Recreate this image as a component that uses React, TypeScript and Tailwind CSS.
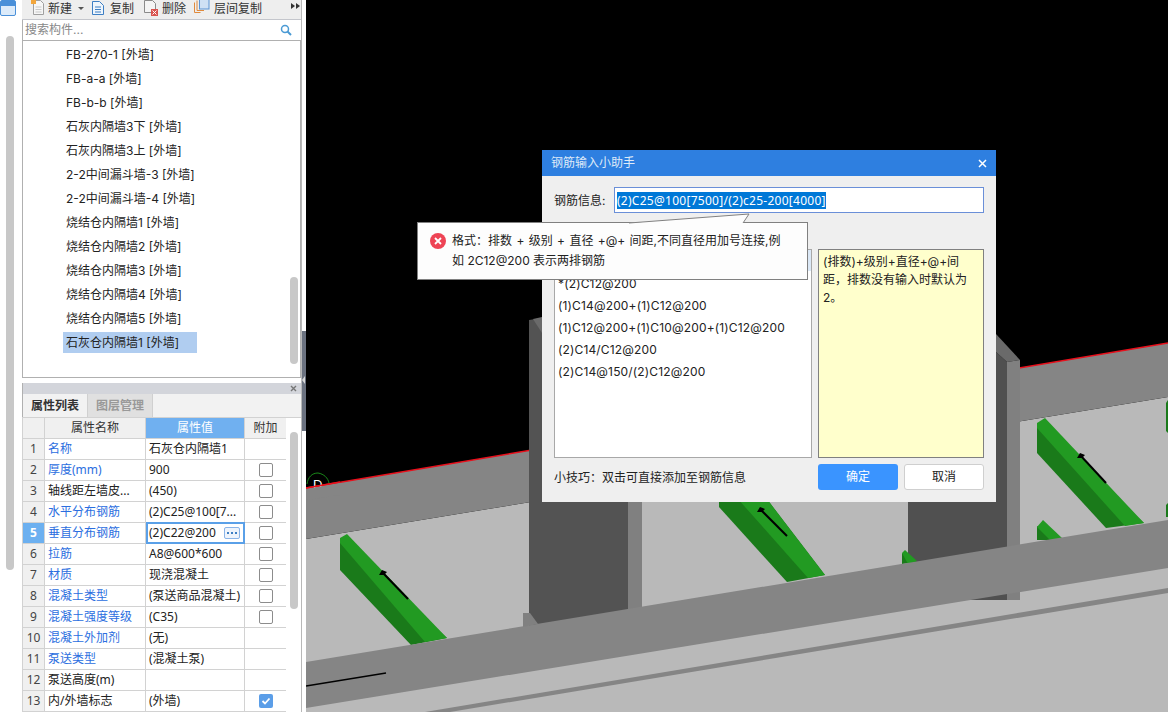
import React from 'react';

const FONT = { fontFamily: 'Inter, "Noto Sans CJK SC", sans-serif' };

const listItems = [
  'FB-270-1 [外墙]',
  'FB-a-a [外墙]',
  'FB-b-b [外墙]',
  '石灰内隔墙3下 [外墙]',
  '石灰内隔墙3上 [外墙]',
  '2-2中间漏斗墙-3 [外墙]',
  '2-2中间漏斗墙-4 [外墙]',
  '烧结仓内隔墙1 [外墙]',
  '烧结仓内隔墙2 [外墙]',
  '烧结仓内隔墙3 [外墙]',
  '烧结仓内隔墙4 [外墙]',
  '烧结仓内隔墙5 [外墙]',
  '石灰仓内隔墙1 [外墙]',
];

interface Prop {
  name: string;
  value: string;
  link: boolean;
  check?: 'off' | 'on';
}

const props: Prop[] = [
  { name: '名称', value: '石灰仓内隔墙1', link: true },
  { name: '厚度(mm)', value: '900', link: true, check: 'off' },
  { name: '轴线距左墙皮...', value: '(450)', link: false, check: 'off' },
  { name: '水平分布钢筋', value: '(2)C25@100[7...', link: true, check: 'off' },
  { name: '垂直分布钢筋', value: '(2)C22@200', link: true, check: 'off' },
  { name: '拉筋', value: 'A8@600*600', link: true, check: 'off' },
  { name: '材质', value: '现浇混凝土', link: true, check: 'off' },
  { name: '混凝土类型', value: '(泵送商品混凝土)', link: true, check: 'off' },
  { name: '混凝土强度等级', value: '(C35)', link: true, check: 'off' },
  { name: '混凝土外加剂', value: '(无)', link: true },
  { name: '泵送类型', value: '(混凝土泵)', link: true },
  { name: '泵送高度(m)', value: '', link: false },
  { name: '内/外墙标志', value: '(外墙)', link: false, check: 'on' },
];

const samples = [
  '*(2)C12@200',
  '(1)C14@200+(1)C12@200',
  '(1)C12@200+(1)C10@200+(1)C12@200',
  '(2)C14/C12@200',
  '(2)C14@150/(2)C12@200',
];

// green bars in page coordinates
const Bar = ({ dark, light, arrow }: { dark: string; light: string; arrow?: [number, number, number, number] }) => (
  <>
    <polygon points={dark} fill="#1a7a1a" />
    <polygon points={light} fill="#229a22" />
    {arrow && (
      <>
        <line x1={arrow[0]} y1={arrow[1]} x2={arrow[2]} y2={arrow[3]} stroke="#000" strokeWidth="2" />
        <polygon points={`${arrow[0] - 4},${arrow[1] + 2} ${arrow[0] - 1},${arrow[1] - 3} ${arrow[0] + 4},${arrow[1] - 1} ${arrow[0] + 1},${arrow[1] + 2}`} fill="#000" />
      </>
    )}
  </>
);

const Scene = () => (
  <svg className="block w-[862px] h-[712px]" viewBox="306 0 862 712">
    <rect x="306" y="0" width="862" height="712" fill="#000" />
    {/* floor and back wall */}
    <polygon points="306,539 1168,397 1168,712 306,712" fill="#b9b9b9" />
    <polygon points="306,488 1168,343 1168,397 306,539" fill="#858585" />
    <polyline points="306,488 1168,343" fill="none" stroke="#e8101c" strokeWidth="1.5" />
    {/* axis marker */}
    <path d="M307 484 C308 477 312 473 318 473 C324 474 328 478 329 483" fill="none" stroke="#1a8a1a" strokeWidth="1" />
    <text x="313" y="489" fill="#fff" fontSize="13" fontFamily="Liberation Sans, sans-serif">D</text>
    <polygon points="306,489 340,483 340,495 306,500" fill="#858585" />
    <polyline points="306,488 340,482" fill="none" stroke="#e8101c" strokeWidth="1.5" />
    {/* pillars */}
    <polygon points="529,320 628,305 628,640 529,640" fill="#535353" />
    <polygon points="533,319 542,317 542,333" fill="#6a6a6a" />
    <polygon points="628,300 642,300 642,640 628,640" fill="#808080" />
    <polygon points="908,300 996,300 996,352 1007,362 1007,600 908,600" fill="#505050" />
    <polygon points="996,334 1020,360 1007,362 996,352" fill="#6a6a6a" />
    <polygon points="1007,362 1020,360 1020,600 1007,600" fill="#808080" />
    {/* green bars */}
    <Bar dark="340,538 340,570 411,645 447,638" light="340,543 340,538 347,534 447,638 425,642" arrow={[383, 573, 408, 599]} />
    <Bar dark="719,490 719,507 787,582 825,575 760,490" light="730,490 760,490 825,575 808,578" arrow={[761, 510, 787, 536]} />
    <Bar dark="1037,423 1037,453 1106,528 1144,523" light="1037,428 1037,423 1045,418 1144,523 1125,526" arrow={[1081, 456, 1106, 483]} />
    <Bar dark="1037,526 1037,540 1062,540" light="1037,527 1043,520 1062,538 1050,540" />
    <Bar dark="902,553 902,564 917,562" light="902,553 905,550 917,561 908,564" />
    <polygon points="1166,403 1168,400 1168,433 1166,431" fill="#1a7a1a" />
    <polygon points="1166,505 1168,503 1168,517 1166,517" fill="#1a7a1a" />
    {/* front wall */}
    <polygon points="306,662 1168,520 1168,568 306,708" fill="#858585" />
    <polygon points="523,613 530,613 538,624 523,627" fill="#808080" />
    <polygon points="425,712 1168,588 1168,593 450,712" fill="#858585" />
    <line x1="306" y1="686" x2="386" y2="673" stroke="#000" strokeWidth="1.5" />
  </svg>
);

const Toolbar = () => (
  <div className="flex items-center h-[20px] bg-[#eeeeee] border-b border-[#c4c6cc] text-[12px] text-[#333] pl-[8px] pb-[2px] relative">
    <svg width="16" height="16" viewBox="0 0 16 16" className="mr-[2px] -mt-[4px]">
      <path d="M3.5 1.5h7l3 3v11h-10z" fill="#f6f6f6" stroke="#a0a0a0" />
      <path d="M5.5 8h6M5.5 10.500h6M5.500 13h6" stroke="#c8c8c8" />
      <rect x="1" y="0" width="5" height="5" fill="#f2a63c" />
    </svg>
    <span>新建</span>
    <span className="ml-[6px] mr-[7px] w-0 h-0 border-x-[3px] border-x-transparent border-t-[3px] border-t-[#555]"></span>
    <svg width="14" height="16" viewBox="0 0 14 16" className="mr-[5px] -mt-[2px]">
      <path d="M1.500 1.500h7l4 4v9h-11z" fill="#eef5fc" stroke="#3d7fc4" />
      <path d="M4 7h6M4 9.500h6M4 12h6" stroke="#3d7fc4" />
    </svg>
    <span>复制</span>
    <svg width="16" height="16" viewBox="0 0 16 16" className="ml-[9px] mr-[3px] -mt-[2px]">
      <path d="M1.500 0.500h8l3 3v9h-11z" fill="#f4f4f4" stroke="#8a8a8a" />
      <rect x="8" y="9" width="7" height="7" fill="#d9534f" />
      <path d="M9.500 10.500l4 4M13.500 10.500l-4 4" stroke="#fff" />
    </svg>
    <span>删除</span>
    <svg width="16" height="17" viewBox="0 0 16 17" className="ml-[8px] mr-[4px] -mt-[4px]">
      <path d="M0.500 4.500v10h6M3 2.500v10h7" fill="none" stroke="#e08a3c" />
      <rect x="5.500" y="0" width="9.500" height="11" fill="#cfe0f4" stroke="#5b93d3" />
    </svg>
    <span>层间复制</span>
    <span className="absolute left-[269px] top-[3px] flex gap-[1px]">
      <span className="w-0 h-0 border-y-[3.500px] border-y-transparent border-l-[4px] border-l-[#333]"></span>
      <span className="w-0 h-0 border-y-[3.500px] border-y-transparent border-l-[4px] border-l-[#333]"></span>
    </span>
  </div>
);

const Check = ({ on }: { on: boolean }) =>
  on ? (
    <span className="w-[14px] h-[14px] rounded-[2px] bg-[#5b9ee8] flex items-center justify-center">
      <svg width="10" height="10" viewBox="0 0 10 10"><path d="M1.500 5l2.500 2.500 4.500-5" fill="none" stroke="#fff" strokeWidth="1.800" /></svg>
    </span>
  ) : (
    <span className="w-[14px] h-[14px] rounded-[2px] bg-white border border-[#8c8c8c]"></span>
  );

const PropTable = () => (
  <div className="w-[263px] text-[12px] leading-[20px] text-[#222] [font-family:'Noto_Sans','Noto_Sans_CJK_SC',sans-serif]">
    <div className="flex h-[21px] border-b border-[#d2d2d2] bg-[#f0f0f0] text-[#333]">
      <div className="w-[22px] border-r border-[#d2d2d2]"></div>
      <div className="w-[101px] border-r border-[#d2d2d2] text-center">属性名称</div>
      <div className="w-[99px] border-r border-[#d2d2d2] text-center bg-[#70b0f0] text-white">属性值</div>
      <div className="w-[41px] text-center">附加</div>
    </div>
    {props.map((p, i) => (
      <div key={p.name} className="flex h-[21px] border-b border-[#d2d2d2]">
        <div className={i === 4 ? 'w-[22px] border-r border-[#d2d2d2] text-center bg-[#6cb0f0] text-white font-bold' : 'w-[22px] border-r border-[#d2d2d2] text-center bg-[#f0f0f0] text-[#444]'}>{i + 1}</div>
        <div className={p.link ? 'w-[101px] border-r border-[#d2d2d2] pl-[3px] whitespace-nowrap overflow-hidden text-[#2b6ee0]' : 'w-[101px] border-r border-[#d2d2d2] pl-[3px] whitespace-nowrap overflow-hidden'}>{p.name}</div>
        {i === 4 ? (
          <div className="w-[99px] border-2 border-[#5aa0e8] -my-px pl-[1px] flex items-center justify-between pr-[3px] whitespace-nowrap">
            <span>{p.value}</span>
            <span className="w-[16px] h-[12px] rounded-[2px] border border-[#8ab4e8] bg-[#eef4fc] flex items-center justify-center gap-[2px]">
              <span className="w-[2px] h-[2px] bg-[#3d7fc4]"></span>
              <span className="w-[2px] h-[2px] bg-[#3d7fc4]"></span>
              <span className="w-[2px] h-[2px] bg-[#3d7fc4]"></span>
            </span>
          </div>
        ) : (
          <div className="w-[99px] border-r border-[#d2d2d2] pl-[3px] whitespace-nowrap overflow-hidden">{p.value}</div>
        )}
        <div className="w-[41px] flex items-center justify-center">
          {p.check && <Check on={p.check === 'on'} />}
        </div>
      </div>
    ))}
  </div>
);

const Dialog = () => (
  <div className="absolute left-[236px] top-[150px] w-[454px] h-[352px] bg-[#efefef] text-[12px] text-[#222] flex flex-col">
    <div className="h-[26px] shrink-0 bg-[#2e7fe0] text-white flex items-center justify-between pl-[9px] pr-[9px]">
      <span className="text-[#dfeaf8]">钢筋输入小助手</span>
      <svg width="9" height="9" viewBox="0 0 9 9"><path d="M1 1l7 7M8 1l-7 7" stroke="#fff" strokeWidth="1.500" /></svg>
    </div>
    <div className="px-[12px] flex flex-col">
      <div className="mt-[11px] h-[26px] flex items-center">
        <span className="w-[60px] mt-[1px]">钢筋信息:</span>
        <div className="flex-1 h-[26px] bg-white border border-[#6a8fd8] flex items-center pl-[2px]">
          <span className="bg-[#0078d7] text-white leading-[17px] whitespace-nowrap tracking-[0.27px] [font-family:'Noto_Sans',sans-serif]">(2)C25@100[7500]/(2)c25-200[4000]</span>
        </div>
      </div>
      <div className="mt-[36px] flex gap-[6px] h-[209px]">
        <div className="w-[258px] bg-white border border-[#a8a8a8]">
          <div className="h-[21px] bg-[#dbe8f6] mb-[2px]"></div>
          {samples.map((s) => (
            <div key={s} className="h-[22px] leading-[22px] pl-[3px] whitespace-nowrap tracking-[0.15px]">{s}</div>
          ))}
        </div>
        <div className="w-[166px] bg-[#ffffcc] border border-[#808080] pl-[4px] pr-[14px] pt-[3px] leading-[18px]">
          (排数)+级别+直径+@+间距，排数没有输入时默认为2。
        </div>
      </div>
      <div className="mt-[6px] flex items-center h-[26px]">
        <span className="w-[264px] mt-[1px]">小技巧：双击可直接添加至钢筋信息</span>
        <button className="w-[80px] h-[26px] rounded-[3px] bg-[#3a94ff] text-white">确定</button>
        <button className="ml-[6px] w-[80px] h-[26px] rounded-[3px] bg-white border border-[#cfcfcf] text-[#222]">取消</button>
      </div>
    </div>
  </div>
);

const Tip = () => (
  <div className="absolute left-[111px] top-[222px] w-[391px] h-[58px] bg-[#fdfdfd] border border-[#808080] flex text-[12px] text-[#222] leading-[20px] pt-[8px] pl-[12px]">
    <svg className="absolute left-[211px] -top-[10px]" width="122" height="11" viewBox="0 0 122 11">
      <polygon points="0,10 120,1 114,10" fill="#fdfdfd" />
      <path d="M0 10L120 1L114 10" fill="none" stroke="#808080" />
    </svg>
    <svg width="16" height="16" viewBox="0 0 16 16" className="shrink-0 mt-[2px]">
      <circle cx="8" cy="8" r="8" fill="#ee4455" />
      <path d="M5 5l6 6M11 5l-6 6" stroke="#fff" strokeWidth="1.800" />
    </svg>
    <div className="ml-[6px] whitespace-nowrap">
      <div className="[word-spacing:1px]">格式：排数 + 级别 + 直径 +@+ 间距,不同直径用加号连接,例</div>
      <div>如 2C12@200 表示两排钢筋</div>
    </div>
  </div>
);

export default function App() {
  return (
    <div className="w-[1168px] h-[712px] flex overflow-hidden bg-white" style={FONT}>
      {/* left rail */}
      <div className="w-[22px] shrink-0 relative">
        <div className="w-[16px] h-[16px] rounded-[2px] border border-[#4a90d9] bg-[#dcebfa]">
          <div className="h-[5px] bg-[#4a90d9]"></div>
        </div>
        <div className="mt-[20px] ml-[6px] w-[8px] h-[534px] rounded-[4px] bg-[#c8c8c8]"></div>
      </div>

      {/* component list + properties */}
      <div className="w-[280px] shrink-0 flex flex-col border-r border-[#b8b8b8]">
        <Toolbar />
        <div className="h-[20px] flex items-center justify-between pl-[2px] pr-[9px] text-[12px] text-[#888] border-l border-[#b0b0b0]">
          <span>搜索构件...</span>
          <svg width="12" height="12" viewBox="0 0 12 12"><circle cx="5" cy="5" r="3.500" fill="none" stroke="#4a9ad4" strokeWidth="1.500" /><path d="M7.500 7.500l3.500 3.500" stroke="#4a9ad4" strokeWidth="2" /></svg>
        </div>
        <div className="h-[338px] border border-[#b0b0b0] flex pt-[2px] text-[12px] text-[#222] relative">
          <div className="flex flex-col items-start pl-[40px]">
            {listItems.map((item, i) => (
              <div key={item} className={i === 12 ? 'h-[21px] mt-[1px] w-[134px] leading-[21px] pl-[3px] bg-[#b0cdf0] whitespace-nowrap' : 'h-[24px] leading-[24px] pl-[3px] whitespace-nowrap'}>{item}</div>
            ))}
          </div>
          <div className="absolute left-[267px] top-[236px] w-[8px] h-[87px] rounded-[4px] bg-[#c8c8c8]"></div>
        </div>
        <div className="mt-[5px] h-[11px] bg-[#d3d5db] border-l border-[#b0b0b0] flex items-center justify-end pr-[4px]">
          <svg width="7" height="7" viewBox="0 0 7 7"><path d="M1 1l5 5M6 1l-5 5" stroke="#777" strokeWidth="1.400" /></svg>
        </div>
        <div className="h-[23px] flex bg-[#f2f2f2] text-[12px] leading-[23px] border-l border-[#b0b0b0]">
          <div className="w-[65px] text-center text-[#333] font-bold border-r border-[#d0d0d0]">属性列表</div>
          <div className="w-[65px] text-center text-[#999] font-bold bg-[#e0e0e0] border-r border-[#d0d0d0]">图层管理</div>
        </div>
        <div className="flex border-l border-[#b0b0b0] flex-1 border-t border-[#d2d2d2]">
          <PropTable />
          <div className="ml-[4px] mt-[14px] w-[8px] h-[177px] rounded-[4px] bg-[#c8c8c8]"></div>
        </div>
      </div>

      {/* splitter */}
      <div className="w-[4px] shrink-0 flex flex-col">
        <div className="h-[331px]"></div>
        <div className="h-[100px] bg-[#6b7280] flex items-center">
          <span className="w-0 h-0 border-y-[4px] border-y-transparent border-r-[3px] border-r-[#d8d8d8] -mt-[2px]"></span>
        </div>
      </div>

      {/* 3d view */}
      <div className="relative flex-1 overflow-hidden">
        <Scene />
        <Dialog />
        <Tip />
      </div>
    </div>
  );
}
